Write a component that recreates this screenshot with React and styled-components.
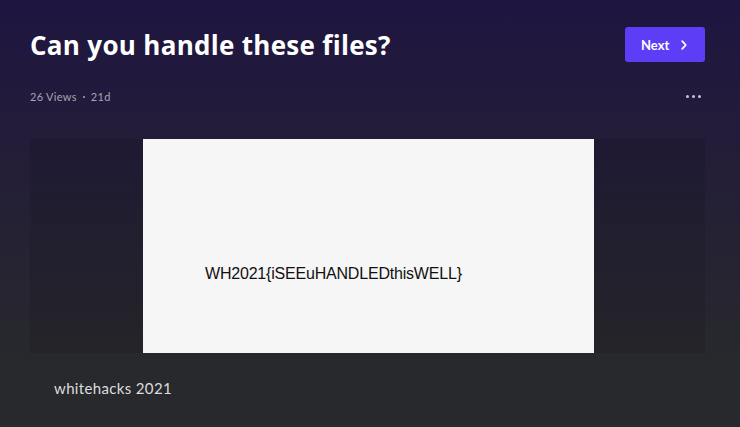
import React from 'react';
import styled, {createGlobalStyle} from 'styled-components';

const GlobalStyle = createGlobalStyle`
  html, body {
    margin: 0;
    padding: 0;
    background: #28292d;
  }
  body {
    font-family: Lato, "Open Sans", "Liberation Sans", sans-serif;
  }
`;

const App = () => {
  return (
      <>
        <GlobalStyle/>
        <Page>
          <Header>
            <Title>Can you handle these files?</Title>
            <NextButton>
              Next
              <svg width="12" height="12" viewBox="0 0 12 12" fill="none">
                <path d="M4.2 2.2L7.8 6L4.2 9.8" stroke="#fff" strokeWidth="1.8"
                      strokeLinecap="round" strokeLinejoin="round"/>
              </svg>
            </NextButton>
          </Header>
          <MetaRow>
            <Meta>
              26 Views
              <Dot/>
              21d
            </Meta>
            <MoreButton>
              <MoreDot/>
              <MoreDot/>
              <MoreDot/>
            </MoreButton>
          </MetaRow>
          <MediaCard>
            <Picture>
              <Flag>WH2021{'{'}iSEEuHANDLEDthisWELL{'}'}</Flag>
            </Picture>
          </MediaCard>
          <Caption>whitehacks 2021</Caption>
        </Page>
      </>
  );
};

export default App;

const Page = styled.div`
  box-sizing: border-box;
  width: 740px;
  height: 427px;
  padding: 27px 35px 0 30px;
  background: linear-gradient(180deg, #1f1541 0%, #231d38 35%, #28292d 85%);
  overflow: hidden;
`;

const Header = styled.div`
  display: flex;
  align-items: center;
  justify-content: space-between;
  height: 35px;
`;

const Title = styled.h1`
  margin: 0;
  color: #ffffff;
  font-family: "Open Sans", Lato, sans-serif;
  font-size: 26px;
  font-weight: 700;
  letter-spacing: 0.3px;
`;

const NextButton = styled.button`
  display: flex;
  align-items: center;
  gap: 9px;
  box-sizing: border-box;
  width: 80px;
  height: 35px;
  padding: 0 0 0 16px;
  border: none;
  border-radius: 3px;
  background: #5d3df5;
  color: #ffffff;
  font-family: Lato, "Open Sans", sans-serif;
  font-size: 13px;
  font-weight: 700;
  cursor: pointer;
`;

const MetaRow = styled.div`
  display: flex;
  align-items: center;
  justify-content: space-between;
  margin-top: 26px;
  height: 16px;
  padding-right: 4px;
`;

const Meta = styled.div`
  display: flex;
  align-items: center;
  gap: 6px;
  color: #a7a3b3;
  font-size: 11px;
  letter-spacing: 0.3px;
`;

const Dot = styled.span`
  width: 2px;
  height: 2px;
  margin-top: 1px;
  border-radius: 50%;
  background: #a7a3b3;
`;

const MoreButton = styled.div`
  display: flex;
  gap: 3px;
  align-items: center;
`;

const MoreDot = styled.span`
  width: 3px;
  height: 3px;
  border-radius: 50%;
  background: #c9c6d2;
`;

const MediaCard = styled.div`
  display: flex;
  justify-content: center;
  margin-top: 35px;
  height: 214px;
  background: rgba(0, 0, 0, 0.09);
  padding-left: 2px;
`;

const Picture = styled.div`
  box-sizing: border-box;
  width: 451px;
  height: 214px;
  padding: 126px 0 0 62px;
  background: #f6f6f6;
`;

const Flag = styled.div`
  color: #111111;
  font-family: "Liberation Sans", Arial, sans-serif;
  font-size: 16px;
  letter-spacing: -0.2px;
`;

const Caption = styled.p`
  margin: 26px 0 0 24px;
  color: #dcdcdf;
  font-size: 15px;
  font-weight: 400;
  letter-spacing: 0.35px;
`;
